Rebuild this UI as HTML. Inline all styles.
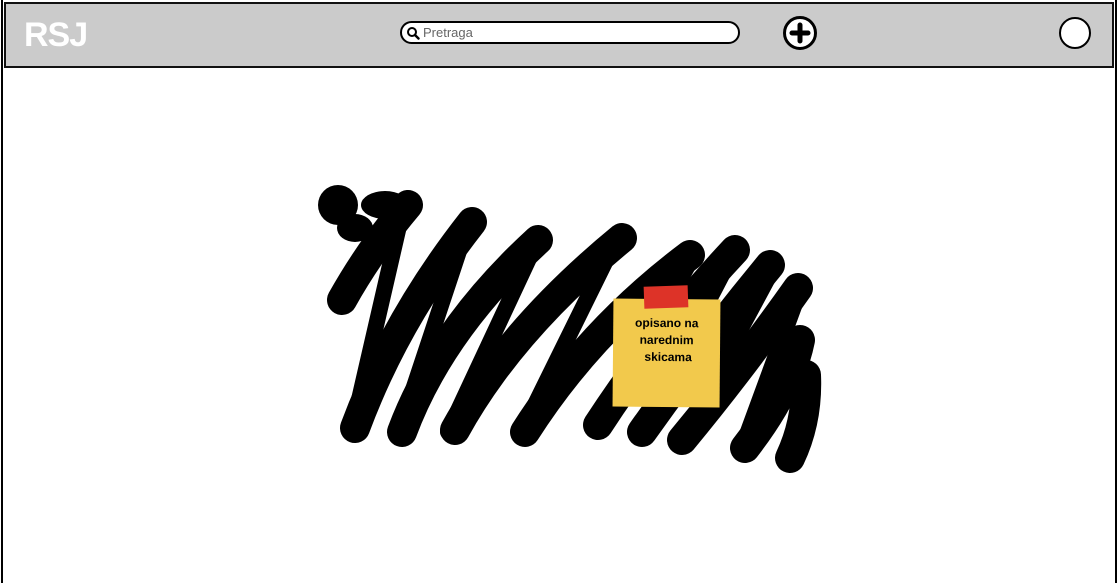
<!DOCTYPE html>
<html><head><meta charset="utf-8"><style>
html,body{margin:0;padding:0;background:#fff;width:1117px;height:583px;overflow:hidden;font-family:"Liberation Sans",sans-serif}
.frame{position:absolute;left:1px;top:0;width:1112px;height:583px;border:2px solid #000;border-top:none;border-bottom:none}
.hdr{position:absolute;left:4px;top:2px;width:1110px;height:66px;background:#cbcbcb;border:2px solid #111;box-sizing:border-box}
.logo{position:absolute;left:18px;top:12px;color:#fff;font-size:34px;font-weight:bold;letter-spacing:-1px}
.search{position:absolute;left:400px;top:21px;width:340px;height:23px;background:#fff;border:2px solid #000;border-radius:12px;box-sizing:border-box}
.search span{position:absolute;left:21px;top:2px;font-size:13px;color:#666}
.note{position:absolute;left:613px;top:299px;width:107px;height:108px;background:#f2c94c;transform:rotate(0.5deg);text-align:center;font-size:12px;font-weight:bold;line-height:17px;padding-top:16px;box-sizing:border-box}
.tape{position:absolute;left:644px;top:286px;width:44px;height:22px;background:#dd3328;transform:rotate(-2deg)}
</style></head><body>
<div class="frame"></div>
<div class="hdr">
<div class="logo">RSJ</div>
</div>
<div class="search"><svg style="position:absolute;left:4px;top:3px" width="14" height="14" viewBox="0 0 14 14"><circle cx="6" cy="6" r="4" fill="none" stroke="#000" stroke-width="2"/><path d="M9 9l3.5 3.5" stroke="#000" stroke-width="2.4" stroke-linecap="round"/></svg><span>Pretraga</span></div>
<svg style="position:absolute;left:782px;top:15px" width="36" height="36" viewBox="0 0 36 36"><circle cx="18" cy="18" r="15.5" fill="#fff" stroke="#000" stroke-width="3"/><path d="M18 10v16M10 18h16" stroke="#000" stroke-width="5" stroke-linecap="round"/></svg>
<svg style="position:absolute;left:1058px;top:16px" width="36" height="36" viewBox="0 0 36 36"><circle cx="17" cy="17" r="15" fill="#fff" stroke="#000" stroke-width="2"/></svg>
<svg style="position:absolute;left:0;top:0" width="1117" height="583" viewBox="0 0 1117 583">
<g fill="none" stroke="#000" stroke-linecap="round" stroke-linejoin="round" stroke-width="16">
<path d="M405 200 L352 430 M470 218 L398 435 M540 235 L448 432 M620 232 L520 435 M690 262 L598 425 M735 250 L640 432 M775 265 L680 442 M800 290 L742 448"/>
</g>
<g fill="none" stroke="#000" stroke-linecap="round" stroke-width="30">
<path d="M342 300 Q370 250 408 205"/>
<path d="M355 428 Q395 320 472 222"/>
<path d="M402 432 Q440 330 538 240"/>
<path d="M455 430 Q510 330 622 238"/>
<path d="M525 432 Q590 330 690 255"/>
<path d="M598 425 Q660 330 735 250"/>
<path d="M642 432 Q700 350 770 265"/>
<path d="M682 440 Q740 370 798 288"/>
<path d="M745 448 Q790 390 800 340"/>
<path d="M790 458 Q808 420 806 375"/>
</g>
<g fill="#000"><ellipse cx="338" cy="205" rx="20" ry="20"/><ellipse cx="385" cy="205" rx="24" ry="14"/><ellipse cx="355" cy="228" rx="18" ry="14"/></g>
</svg>
<div class="note">opisano na<br>narednim<br>&nbsp;skicama</div>
<div class="tape"></div>
</body></html>
